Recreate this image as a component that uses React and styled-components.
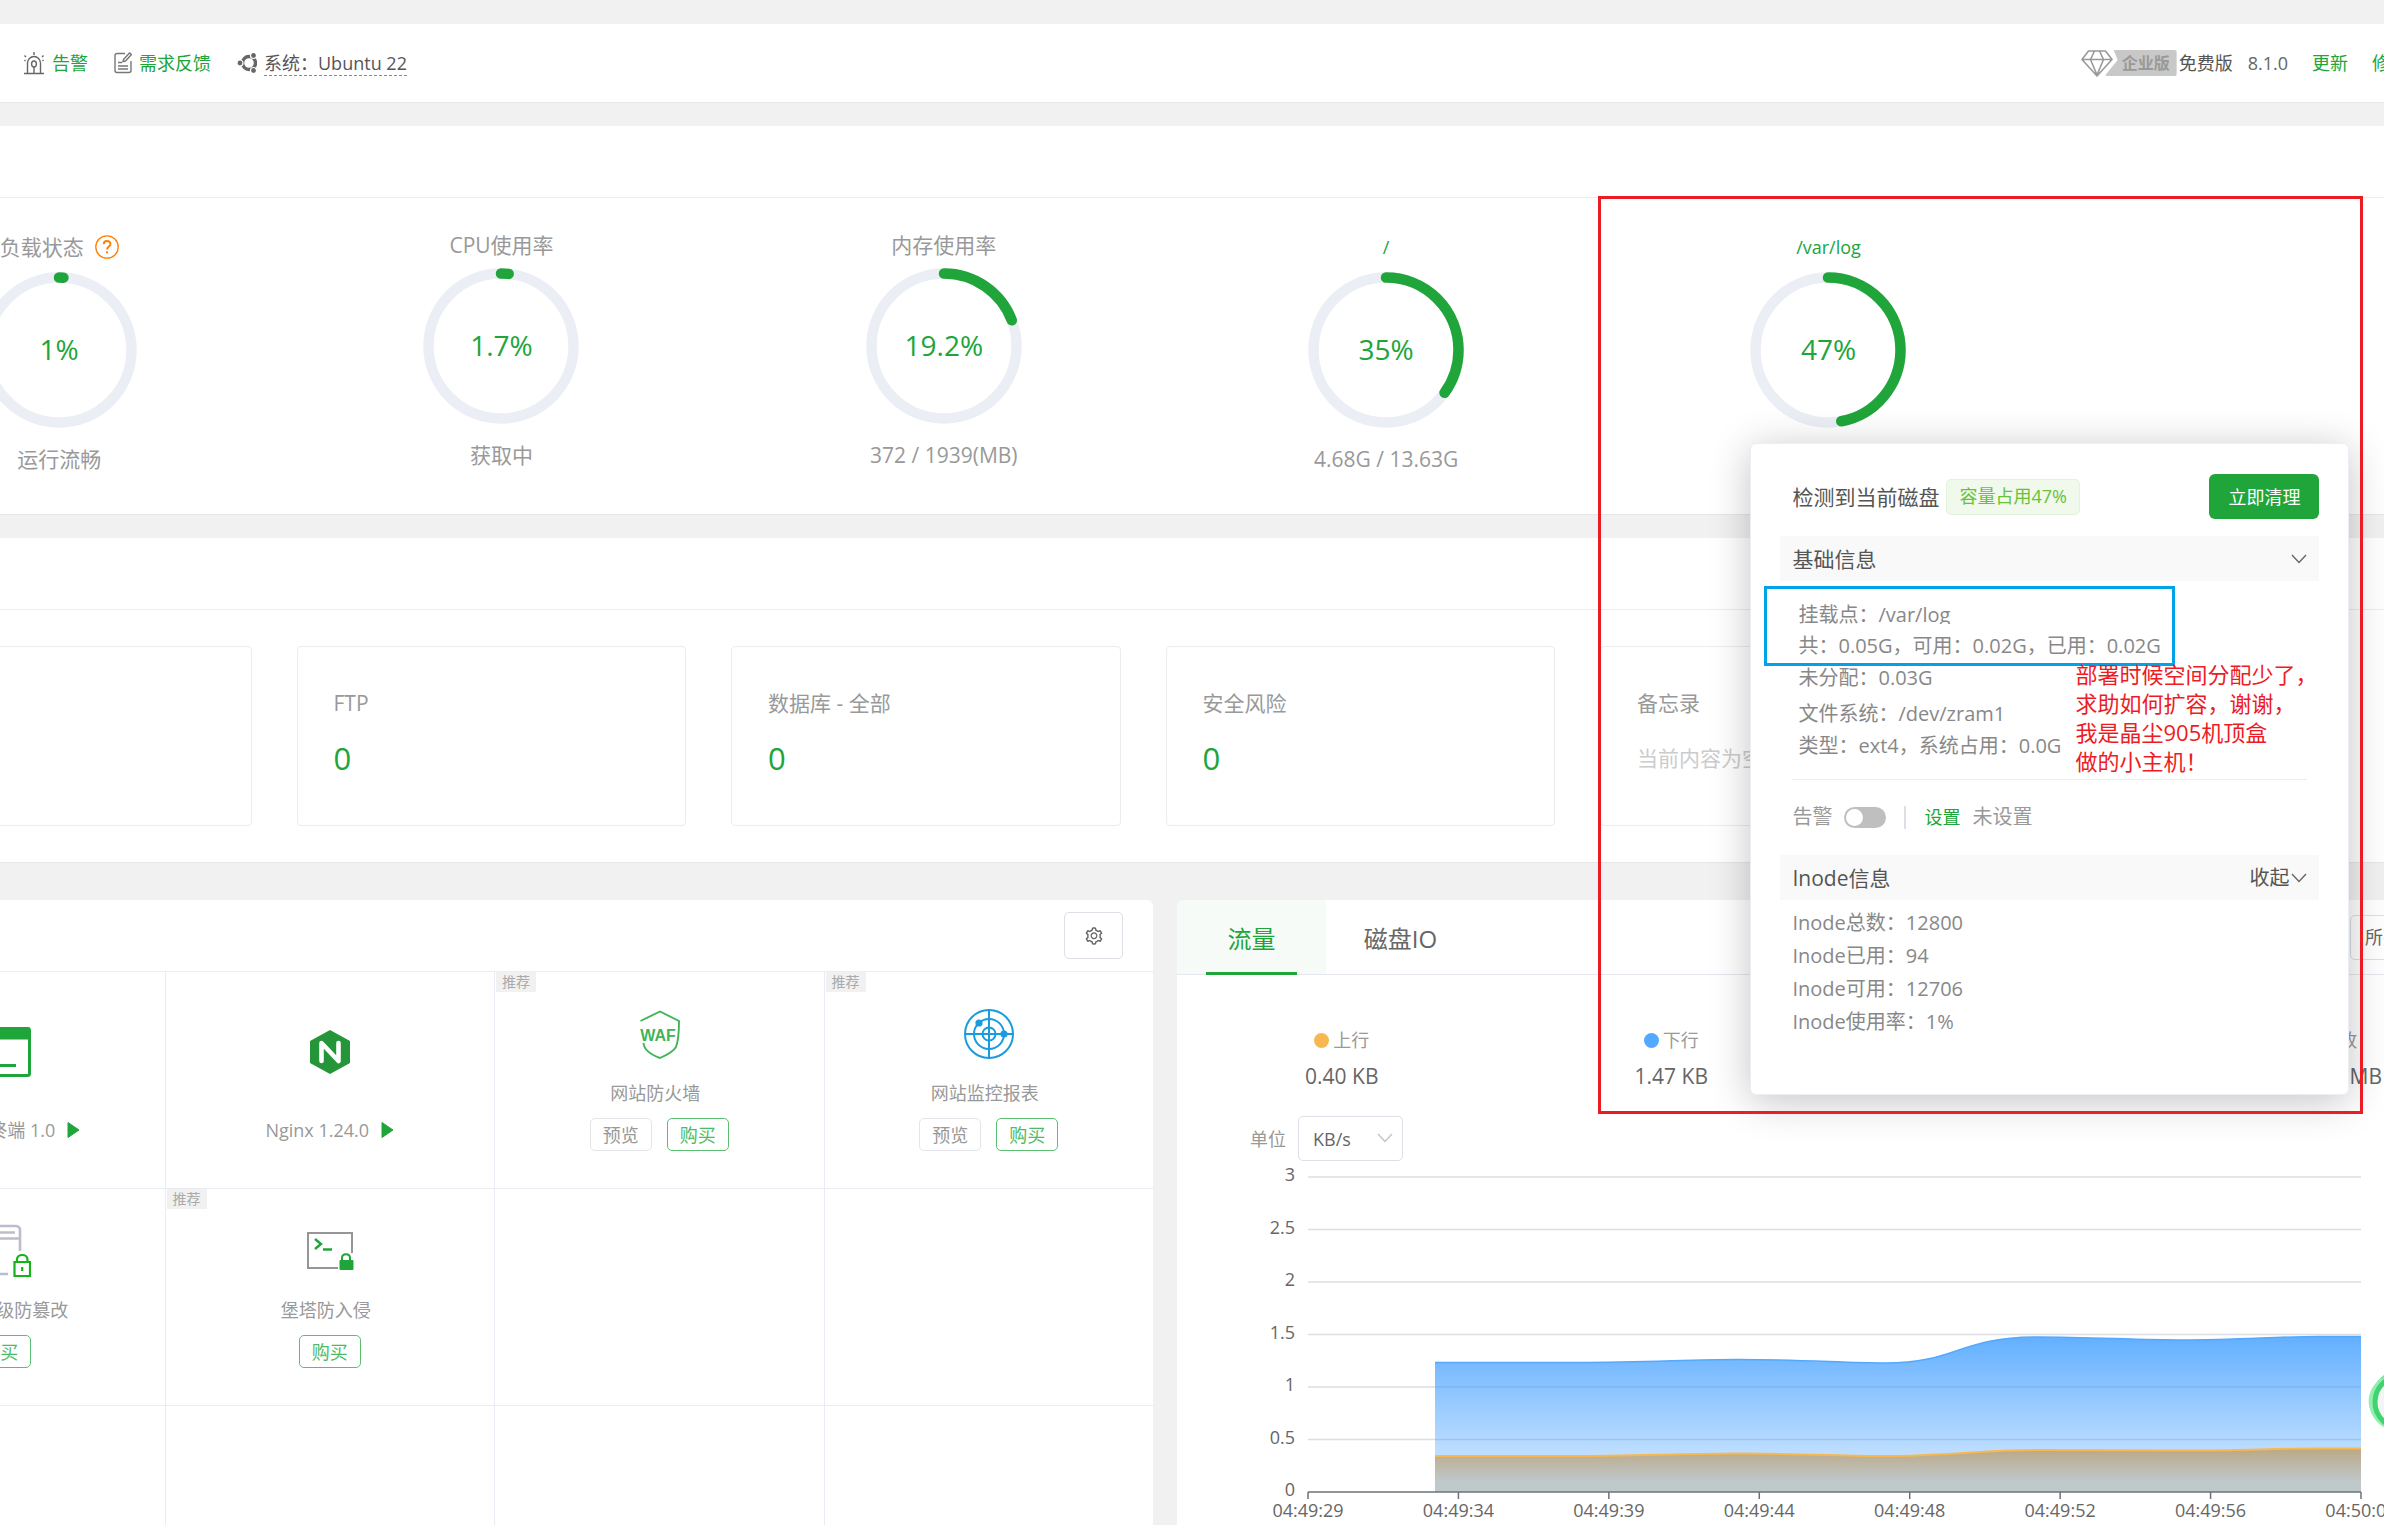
import React from "react";
import styled, { createGlobalStyle, css } from "styled-components";
import { AiOutlineSetting } from "react-icons/ai";

const GREEN = "#20a53a";

const GlobalStyle = createGlobalStyle`
  *, *::before, *::after { box-sizing: border-box; }
  body {
    margin: 0;
    background: #f1f1f1;
    color: #999;
    font-family: "Open Sans", "Noto Sans CJK SC", sans-serif;
    font-size: 18px;
    line-height: 24px;
  }
  button, input, select { font: inherit; color: inherit; }
  svg { display: block; flex: none; }
`;

/* ---------- page frame ---------- */

const Page = styled.div`
  position: relative;
  height: 100vh;
  overflow: hidden;
  padding-top: 24px;
`;

const Shell = styled.main`
  margin: 0 -111px 0 -165px;
  display: flex;
  flex-direction: column;
  gap: 23px;
`;

const Panel = styled.section`
  background: #fff;
  border-bottom: 1px solid #e6e6e6;
`;

const PanelHead = styled.div`
  height: 72px;
  border-bottom: 1px solid #ebeef0;
  display: flex;
  align-items: center;
  justify-content: flex-end;
  padding: 0 30px;
`;

/* ---------- top bar ---------- */

const TopBar = styled.header`
  display: flex;
  align-items: center;
  height: 79px;
  padding: 0 87px 0 188px;
  background: #fff;
  border-bottom: 1px solid #e6e6e6;
`;

const TopItem = styled.div`
  display: flex;
  align-items: center;
  gap: 7px;
  margin-right: 26px;
`;

const Link = styled.a`
  color: ${GREEN};
  text-decoration: none;
`;

const SystemName = styled.span`
  color: #555;
  border-bottom: 1px dashed #888;
`;

const Spacer = styled.div`
  flex: 1;
`;

const Edition = styled.div`
  display: flex;
  align-items: center;
  color: #555;
  margin-right: 15px;
`;

const EditionBadge = styled.span`
  height: 26px;
  line-height: 26px;
  padding: 0 7px 0 17px;
  margin: 0 2px 0 -8px;
  background: #c8c8c8;
  color: #999;
  font-size: 16px;
  font-weight: 700;
  border-radius: 2px;
  clip-path: polygon(9px 0, 100% 0, 100% 100%, 0 100%, 13px 10px);
`;

const Version = styled.span`
  color: #666;
  margin-right: 24px;
`;

const TopLinks = styled.nav`
  display: flex;
  gap: 24px;
`;

/* ---------- gauges ---------- */

const Gauges = styled.div`
  display: grid;
  grid-template-columns: repeat(6, 1fr);
  height: 316px;
  padding: 33px 3px 0;
  font-size: 21px;
`;

const Gauge = styled.div`
  display: flex;
  flex-direction: column;
  align-items: center;
`;

const GaugeTitle = styled.div`
  display: flex;
  align-items: center;
  gap: 11px;
  height: ${(p) => (p.$tall ? 32 : 28)}px;
  margin-bottom: 9px;
  a { font-size: 18px; }
`;

const Ring = styled.div`
  position: relative;
  display: grid;
  place-items: center;
  width: 156px;
  height: 156px;
  > svg, > span { grid-area: 1 / 1; }
  > span { color: ${GREEN}; font-size: 28px; padding-bottom: 2px; }
`;

const GaugeNote = styled.div`
  margin-top: 16px;
  line-height: 30px;
`;

/* ---------- summary cards ---------- */

const Cards = styled.div`
  display: grid;
  grid-template-columns: repeat(6, 1fr);
  gap: 45px;
  padding: 36px 71px 36px 27px;
`;

const Card = styled.article`
  height: 180px;
  padding: 41px 36px 0;
  border: 1px solid #ececec;
  border-radius: 4px;
  font-size: 21px;
  line-height: 30px;
  white-space: nowrap;
`;

const CardValue = styled.div`
  margin-top: 20px;
  line-height: 40px;
  ${(p) => (p.$muted ? css`color: #ccc;` : css`color: ${GREEN}; font-size: 31px;`)}
`;

/* ---------- software ---------- */

const Columns = styled.div`
  display: grid;
  grid-template-columns: minmax(0, 1fr) minmax(0, 1fr);
  gap: 24px;
  margin-top: 14px;
`;

const Rounded = styled.section`
  background: #fff;
  border-radius: 6px;
`;

const IconButton = styled.button`
  display: grid;
  place-items: center;
  width: 59px;
  height: 47px;
  border: 1px solid #dcdfe6;
  border-radius: 5px;
  background: #fff;
  color: #666;
`;

const Apps = styled.div`
  display: grid;
  grid-template-columns: repeat(4, 1fr);
`;

const AppCell = styled.div`
  position: relative;
  display: flex;
  flex-direction: column;
  align-items: center;
  height: 217px;
  padding-top: ${(p) => (p.$running ? 52 : 34)}px;
  border-left: 1px solid #ebebf5;
  border-bottom: 1px solid #ebebf5;
`;

const Tag = styled.span`
  position: absolute;
  top: 0;
  left: 1px;
  padding: 0 6px;
  background: #f1f1f1;
  color: #aaa;
  font-size: 14px;
  line-height: 20px;
`;

const AppIcon = styled.div`
  display: grid;
  place-items: center;
  height: 56px;
`;

const AppName = styled.div`
  display: flex;
  align-items: center;
  gap: 12px;
  margin-top: ${(p) => (p.$running ? 38 : 19)}px;
  padding-right: ${(p) => (p.$running ? 0 : 8)}px;
`;

const AppActions = styled.div`
  display: flex;
  gap: 15px;
  margin-top: 13px;
`;

const SmallButton = styled.button`
  width: 62px;
  height: 33px;
  padding: 0;
  border-radius: 5px;
  background: #fff;
  border: 1px solid ${(p) => (p.$buy ? "#5bbf72" : "#e3e5ea")};
  color: ${(p) => (p.$buy ? "#4dbb65" : "#999")};
`;

/* ---------- traffic ---------- */

const Tabs = styled.div`
  display: flex;
  align-items: center;
  height: 75px;
  border-bottom: 1px solid #e4e7ed;
`;

const Tab = styled.button`
  width: 149px;
  height: 74px;
  padding: 0 29px;
  border: 0;
  border-radius: 6px 0 0 0;
  font-size: 24px;
  background: ${(p) => (p.$active ? "#f6fbf8" : "none")};
  color: ${(p) => (p.$active ? GREEN : "#666")};
  span {
    display: grid;
    place-items: center;
    height: 75px;
    padding-top: 5px;
    border-bottom: 3px solid ${(p) => (p.$active ? GREEN : "transparent")};
  }
`;

const SelectBox = styled.span`
  position: relative;
  width: ${(p) => p.$width}px;
  svg {
    position: absolute;
    right: 10px;
    top: 17px;
    pointer-events: none;
  }
`;

const Select = styled.select`
  appearance: none;
  display: block;
  width: 100%;
  height: 45px;
  padding: 0 14px;
  border: 1px solid #dcdfe6;
  border-radius: 5px;
  background: #fff;
  color: #666;
`;

const Stats = styled.dl`
  display: grid;
  grid-template-columns: repeat(4, 1fr);
  margin: 53px 0 28px;
  text-align: center;
`;

const StatName = styled.dt`
  display: flex;
  align-items: center;
  justify-content: center;
  gap: 4px;
  &::before {
    content: ${(p) => (p.$dot ? '""' : "none")};
    width: 15px;
    height: 15px;
    border-radius: 50%;
    background: ${(p) => p.$dot};
  }
`;

const StatValue = styled.dd`
  margin: 12px 0 0;
  color: #666;
  font-size: 21px;
`;

const UnitRow = styled.div`
  display: flex;
  align-items: center;
  gap: 12px;
  padding-left: 73px;
`;

const Chart = styled.figure`
  display: grid;
  grid-template-columns: 118px minmax(0, 1fr);
  column-gap: 13px;
  margin: 16px 134px 0 0;
  color: #666;
  svg { width: 100%; height: 315px; overflow: visible; }
`;

const YAxis = styled.div`
  display: flex;
  flex-direction: column;
  justify-content: space-between;
  align-items: flex-end;
  margin: -15px 0 -9px;
`;

const XAxis = styled.div`
  grid-column: 2;
  display: flex;
  justify-content: space-between;
  margin: 6px -40px 0;
  span { width: 80px; text-align: center; }
`;

/* ---------- disk popover ---------- */

const Popover = styled.div`
  position: absolute;
  top: 171px;
  left: 0;
  z-index: 5;
  width: 599px;
  padding: 30px 29px 56px;
  border: 1px solid #ebeef5;
  border-radius: 6px;
  background: #fff;
  box-shadow: 0 6px 40px rgba(0, 0, 0, 0.24);
  color: #888;
  font-size: 20px;
  line-height: 32px;
  white-space: nowrap;
`;

const PopHead = styled.div`
  display: flex;
  align-items: center;
  height: 45px;
  margin-bottom: 17px;
  padding-left: 12px;
  color: #555;
  font-size: 21px;
`;

const Usage = styled.span`
  height: 36px;
  margin-left: 7px;
  padding: 0 12px;
  border: 1px solid #e1f3d8;
  border-radius: 5px;
  background: #f0f9eb;
  color: #67c23a;
  font-size: 18px;
`;

const CleanButton = styled.button`
  width: 110px;
  height: 45px;
  margin-left: auto;
  border: 0;
  border-radius: 6px;
  background: ${GREEN};
  color: #fff;
  font-size: 18px;
`;

const Section = styled.button`
  display: flex;
  align-items: center;
  width: 100%;
  height: 45px;
  padding: 0 12px;
  border: 0;
  background: #f9f9f9;
  color: #555;
  font-size: 21px;
  small { font-size: 20px; margin-right: 2px; }
`;

const Details = styled.div`
  margin: 18px 12px 0;
  padding: 0 6px 17px;
  border-bottom: 1px solid #ebeef0;
`;

const Line = styled.div`
  height: 32px;
  & + &[data-group] { margin-top: 4px; }
`;

/* The mount point sits in a scroll box that trims its descenders. */
const MountLine = styled.div`
  height: 25px;
  margin-bottom: 6px;
  overflow: hidden;
`;

const AlarmRow = styled.div`
  display: flex;
  align-items: center;
  height: 28px;
  margin: 23px 12px 24px;
  color: #999;
  a { font-size: 18px; margin-right: 12px; }
`;

const Switch = styled.input`
  appearance: none;
  width: 42px;
  height: 21px;
  margin: 0 18px 0 12px;
  border-radius: 11px;
  background: #bfbfbf;
  &::before {
    content: "";
    display: block;
    width: 17px;
    height: 17px;
    margin: 2px;
    border-radius: 50%;
    background: #fff;
  }
`;

const Rule = styled.span`
  width: 2px;
  height: 23px;
  margin-right: 18px;
  background: #dcdfe6;
`;

const Inodes = styled.div`
  padding: 6px 12px 0;
  line-height: 33px;
`;

/* ---------- hand-drawn marks over the page ---------- */

const RedFrame = styled.div`
  position: absolute;
  top: 196px;
  left: 1598px;
  z-index: 6;
  width: 765px;
  height: 918px;
  border: 3px solid #ed1c24;
  pointer-events: none;
`;

const BlueFrame = styled.div`
  position: absolute;
  top: 142px;
  left: 13px;
  width: 411px;
  height: 80px;
  border: 3px solid #00a2e8;
`;

const RedNote = styled.p`
  position: absolute;
  top: 216px;
  left: 324px;
  margin: 0;
  color: #ed1c24;
  font-size: 22px;
  line-height: 29px;
`;

const Helper = styled.div`
  position: absolute;
  top: 1370px;
  right: -48px;
`;

/* ---------- icons ---------- */

const AlarmIcon = () => (
  <svg width="22" height="24" viewBox="0 0 22 24" fill="none" stroke="#666" strokeWidth="1.4">
    <path d="M1 22.5h20M4.5 22V12a6.5 6.5 0 0 1 13 0v10M11 4V1M3 6 1.5 4.5M19 6l1.500-1.500M1.500 9l1 1M20.500 9l-1 1" />
    <ellipse cx="11" cy="13" rx="2.400" ry="3" />
    <path d="M11 16v6" />
  </svg>
);

const NoteIcon = () => (
  <svg width="18" height="22" viewBox="0 0 18 22" fill="none" stroke="#777" strokeWidth="1.400">
    <path d="M11 1.500H3A2 2 0 0 0 1 3.500v15a2 2 0 0 0 2 2h12a2 2 0 0 0 2-2V9M4 10.500h4M4 14h10M4 17h10" />
    <path d="M9.500 7.500 15.500 1l2 1.500-6 6.500-2.500.500z" />
  </svg>
);

const UbuntuIcon = () => (
  <svg width="20" height="22" viewBox="0 0 20 22">
    <circle cx="12" cy="11" r="6.500" fill="none" stroke="#666" strokeWidth="3.400" />
    <g fill="#666" stroke="#fff" strokeWidth="1.200">
      <circle cx="3" cy="11" r="3" />
      <circle cx="16.500" cy="3.500" r="3" />
      <circle cx="16.500" cy="18.500" r="3" />
    </g>
  </svg>
);

const DiamondIcon = () => (
  <svg width="32" height="27" viewBox="0 0 32 27" fill="none" stroke="#999" strokeWidth="1.600" strokeLinejoin="round">
    <path d="M7.500 1h17L31 9.500 16 26 1 9.500zM1 9.500h30M13.500 1 9.500 9.500 16 25l6.500-15.500L18.500 1" />
  </svg>
);

const HelpIcon = () => (
  <svg width="24" height="24" viewBox="0 0 24 24" fill="none" stroke="#ff7f00" strokeWidth="1.300">
    <circle cx="12" cy="12" r="11.200" />
    <path d="M8.700 9.300c0-4.400 6.800-4.200 6.800-.300 0 2.500-3.400 2.700-3.400 5.500" strokeWidth="1.900" />
    <path d="M12.100 16.300v2" strokeWidth="2" />
  </svg>
);

const Chevron = ({ color = "#666" }) => (
  <svg width="16" height="10" viewBox="0 0 16 10" fill="none" stroke={color} strokeWidth="1.400">
    <path d="m1 1 7 7.500L15 1" />
  </svg>
);

const PlayIcon = () => (
  <svg width="13" height="16" viewBox="0 0 13 16">
    <path d="M1 .5 12 8 1 15.500z" fill={GREEN} stroke={GREEN} strokeLinejoin="round" />
  </svg>
);

const TerminalIcon = () => (
  <svg width="62" height="50" viewBox="0 0 62 50" fill="none" stroke={GREEN} strokeWidth="3">
    <rect x="1.500" y="1.500" width="59" height="47" rx="2" />
    <path d="M1 6.500h60" strokeWidth="12" />
    <path d="m12 22 9 8-9 8M31 38.500h16" />
  </svg>
);

const NginxIcon = () => (
  <svg width="42" height="44" viewBox="0 0 42 44">
    <path d="M21 0 41 11v22L21 44 1 33V11z" fill="#259539" />
    <path d="M12.500 31V13l17 18V13" fill="none" stroke="#fff" strokeWidth="4.600" strokeLinecap="round" strokeLinejoin="round" />
  </svg>
);

const WafIcon = () => (
  <svg width="42" height="49" viewBox="0 0 42 49" fill="none" stroke="#3fb558" strokeWidth="1.900">
    <path d="M2.500 11 22 1.500 41 11c0 10 0 18-3 26-3 5-9 8-16 11C14 45 6 41 5.500 33" />
    <text x="20" y="30.500" textAnchor="middle" fill="#3fb558" stroke="none" fontFamily="Liberation Sans, sans-serif" fontWeight="700" fontSize="16">WAF</text>
  </svg>
);

const RadarIcon = () => (
  <svg width="50" height="50" viewBox="0 0 50 50" fill="none" stroke="#1a9be0" strokeWidth="2">
    <circle cx="25" cy="25" r="24" />
    <circle cx="25" cy="25" r="15" />
    <circle cx="25" cy="25" r="6.500" />
    <path d="M25 1v48M1 25h48" />
    <circle cx="15" cy="14" r="3.600" fill="#1a9be0" stroke="none" />
    <circle cx="40" cy="25" r="3.600" fill="#1a9be0" stroke="none" />
  </svg>
);

const TamperIcon = () => (
  <svg width="62" height="54" viewBox="0 0 62 54" fill="none" stroke="#bdbccb" strokeWidth="2.600">
    <path d="M51 27V6a4 4 0 0 0-4-4H14a4 4 0 0 0-4 4v40a4 4 0 0 0 4 4h25M10 14.500h41M17 8.500h29" />
    <g stroke="#12b416" strokeWidth="2.200">
      <path d="M45.500 38h15.500v14H45.500zM48 38v-2.500c0-6 10.500-6 10.500 0V38M53.200 43v4" />
    </g>
  </svg>
);

const IntrusionIcon = () => (
  <svg width="48" height="40" viewBox="0 0 48 40" fill="none" stroke="#969696" strokeWidth="2">
    <path d="M46 22V2H2v35h30" />
    <path d="m9 8 6 5-6 5M17 18.500h9" stroke={GREEN} strokeWidth="2.400" />
    <path d="M36 30v-3c0-5 8-5 8 0v3" stroke={GREEN} />
    <rect x="33.500" y="29" width="14" height="10" rx="1" fill={GREEN} stroke="none" />
  </svg>
);

const HelperIcon = () => (
  <svg width="64" height="64" viewBox="0 0 64 64" fill="none">
    <ellipse cx="34" cy="30" rx="29" ry="26" stroke="#76e39b" strokeWidth="6" transform="rotate(-40 32 32)" />
    <ellipse cx="32" cy="34" rx="28" ry="25" stroke="#95eeb0" strokeWidth="6" transform="rotate(30 32 32)" />
    <circle cx="33" cy="32" r="26" fill="#f4f4f4" stroke="#3fd46f" strokeWidth="5" />
  </svg>
);

/* ---------- data ---------- */

const gauges = [
  { title: "负载状态", help: true, value: 1, note: "运行流畅" },
  { title: "CPU使用率", value: 1.7, note: "获取中" },
  { title: "内存使用率", value: 19.2, note: "372 / 1939(MB)" },
  { title: "/", disk: true, value: 35, note: "4.68G / 13.63G" },
  { title: "/var/log", disk: true, value: 47, open: true },
];

const cards = [
  { title: "网站 - 全部", value: "0" },
  { title: "FTP", value: "0" },
  { title: "数据库 - 全部", value: "0" },
  { title: "安全风险", value: "0" },
  { title: "备忘录", note: "当前内容为空" },
];

const apps = [
  { name: "宝塔SSH终端 1.0", Icon: TerminalIcon, running: true },
  { name: "Nginx 1.24.0", Icon: NginxIcon, running: true },
  { name: "网站防火墙", Icon: WafIcon, tag: true, preview: true },
  { name: "网站监控报表", Icon: RadarIcon, tag: true, preview: true },
  { name: "堡塔企业级防篡改", Icon: TamperIcon, tag: true },
  { name: "堡塔防入侵", Icon: IntrusionIcon, tag: true },
  {}, {}, {}, {}, {}, {},
];

const stats = [
  { name: "上行", value: "0.40 KB", dot: "#f7b851" },
  { name: "下行", value: "1.47 KB", dot: "#52a9ff" },
  { name: "总发送", value: "101.32 MB" },
  { name: "总接收", value: "269.85 MB" },
];

const yTicks = ["3", "2.5", "2", "1.5", "1", "0.5", "0"];
const times = ["04:49:29", "04:49:34", "04:49:39", "04:49:44", "04:49:48", "04:49:52", "04:49:56", "04:50:00"];

const downLine =
  "M127 185.500H270C340 185.500 380 182.500 430 182.500C490 182.500 540 186 577 186C650 186 650 160 730 160C780 160 830 163 875 163C930 163 970 159.500 1010 159.500H1053";
const upLine =
  "M127 279H270C340 279 380 276.500 430 276.500C490 276.500 540 279 577 279C640 279 670 273 730 273C780 273 830 273.500 875 273.500C930 273.500 970 271.500 1010 271.500H1053";

/* ---------- parts ---------- */

function RingArc({ value }) {
  const length = 2 * Math.PI * 72.5;
  return (
    <svg width="156" height="156" viewBox="0 0 156 156" fill="none" strokeWidth="10.500">
      <circle cx="78" cy="78" r="72.500" stroke="#ebeef5" />
      <circle
        cx="78" cy="78" r="72.500" stroke={GREEN} strokeLinecap="round"
        strokeDasharray={`${(length * value) / 100} ${length}`} transform="rotate(-90 78 78)"
      />
    </svg>
  );
}

function DiskPopover() {
  return (
    <Popover role="dialog" aria-label="磁盘信息">
      <PopHead>
        检测到当前磁盘<Usage>容量占用47%</Usage>
        <CleanButton type="button">立即清理</CleanButton>
      </PopHead>
      <Section type="button">基础信息<Spacer /><Chevron /></Section>
      <Details>
        <MountLine>挂载点：/var/log</MountLine>
        <Line>共：0.05G，可用：0.02G，已用：0.02G</Line>
        <Line>未分配：0.03G</Line>
        <Line data-group>文件系统：/dev/zram1</Line>
        <Line>类型：ext4，系统占用：0.0G</Line>
      </Details>
      <AlarmRow>
        <label htmlFor="disk-alarm">告警</label>
        <Switch id="disk-alarm" type="checkbox" role="switch" />
        <Rule />
        <Link href="#set">设置</Link>
        <span>未设置</span>
      </AlarmRow>
      <Section type="button">Inode信息<Spacer /><small>收起</small><Chevron /></Section>
      <Inodes>
        <div>Inode总数：12800</div>
        <div>Inode已用：94</div>
        <div>Inode可用：12706</div>
        <div>Inode使用率：1%</div>
      </Inodes>
      <BlueFrame />
      <RedNote>
        部署时候空间分配少了，<br />求助如何扩容，谢谢，<br />我是晶尘905机顶盒<br />做的小主机！
      </RedNote>
    </Popover>
  );
}

function TrafficChart() {
  return (
    <Chart>
      <YAxis>{yTicks.map((t) => <span key={t}>{t}</span>)}</YAxis>
      <svg viewBox="0 0 1053 315" preserveAspectRatio="none" fill="none">
        <defs>
          <linearGradient id="down" x1="0" y1="0" x2="0" y2="1">
            <stop offset="0" stopColor="#409eff" stopOpacity="0.82" />
            <stop offset="1" stopColor="#409eff" stopOpacity="0.18" />
          </linearGradient>
          <linearGradient id="up" x1="0" y1="0" x2="0" y2="1">
            <stop offset="0" stopColor="#bba885" />
            <stop offset="0.75" stopColor="#bfc8ca" />
            <stop offset="1" stopColor="#bfc8cc" />
          </linearGradient>
        </defs>
        {yTicks.slice(0, 6).map((t, i) => (
          <path key={t} d={`M0 ${i * 52.5}H1053`} stroke="#dcdee2" strokeWidth="1.500" />
        ))}
        <path d={`${downLine}V315H127z`} fill="url(#down)" />
        <path d={downLine} stroke="#52a9ff" strokeWidth="1.500" />
        <path d={`${upLine}V315H127z`} fill="url(#up)" />
        <path d={upLine} stroke="#f7b851" strokeWidth="2" />
        <path d="M0 315H1053" stroke="#6e7079" strokeWidth="1.500" />
        {times.map((t, i) => (
          <path key={t} d={`M${(i * 1053) / 7} 315v7`} stroke="#6e7079" strokeWidth="1.500" />
        ))}
      </svg>
      <XAxis>{times.map((t) => <span key={t}>{t}</span>)}</XAxis>
    </Chart>
  );
}

export default function App() {
  return (
    <Page>
      <GlobalStyle />
      <Shell>
        <TopBar>
          <TopItem><AlarmIcon /><Link href="#alarm">告警</Link></TopItem>
          <TopItem><NoteIcon /><Link href="#feedback">需求反馈</Link></TopItem>
          <TopItem><UbuntuIcon /><SystemName>系统：Ubuntu 22</SystemName></TopItem>
          <Spacer />
          <Edition><DiamondIcon /><EditionBadge>企业版</EditionBadge>免费版</Edition>
          <Version>8.1.0</Version>
          <TopLinks>
            <Link href="#update">更新</Link>
            <Link href="#repair">修复</Link>
          </TopLinks>
        </TopBar>

        <Panel>
          <PanelHead />
          <Gauges>
            {gauges.map((g) => (
              <Gauge key={g.title}>
                <GaugeTitle $tall={g.disk || g.help}>
                  {g.disk ? <Link href="#disk">{g.title}</Link> : g.title}
                  {g.help && <HelpIcon />}
                </GaugeTitle>
                <Ring>
                  <RingArc value={g.value} />
                  <span>{g.value}%</span>
                  {g.open && <DiskPopover />}
                </Ring>
                {g.note && <GaugeNote>{g.note}</GaugeNote>}
              </Gauge>
            ))}
          </Gauges>
        </Panel>

        <Panel>
          <PanelHead />
          <Cards>
            {cards.map((c) => (
              <Card key={c.title}>
                {c.title}
                <CardValue $muted={!!c.note}>{c.note || c.value}</CardValue>
              </Card>
            ))}
          </Cards>
        </Panel>

        <Columns>
          <Rounded>
            <PanelHead>
              <IconButton type="button" aria-label="设置"><AiOutlineSetting size={20} /></IconButton>
            </PanelHead>
            <Apps>
              {apps.map(({ name, Icon, running, tag, preview }, i) => (
                <AppCell key={i} $running={running}>
                  {tag && <Tag>推荐</Tag>}
                  {name && (
                    <>
                      <AppIcon><Icon /></AppIcon>
                      <AppName $running={running}>{name}{running && <PlayIcon />}</AppName>
                      {!running && (
                        <AppActions>
                          {preview && <SmallButton type="button">预览</SmallButton>}
                          <SmallButton type="button" $buy>购买</SmallButton>
                        </AppActions>
                      )}
                    </>
                  )}
                </AppCell>
              ))}
            </Apps>
          </Rounded>

          <Rounded>
            <Tabs>
              <Tab type="button" $active><span>流量</span></Tab>
              <Tab type="button"><span>磁盘IO</span></Tab>
              <Spacer />
              <SelectBox $width={145}>
                <Select aria-label="网卡"><option>所有</option></Select>
                <Chevron color="#c0c4cc" />
              </SelectBox>
            </Tabs>
            <Stats>
              {stats.map((s) => (
                <div key={s.name}>
                  <StatName $dot={s.dot}>{s.name}</StatName>
                  <StatValue>{s.value}</StatValue>
                </div>
              ))}
            </Stats>
            <UnitRow>
              <label htmlFor="unit">单位</label>
              <SelectBox $width={105}>
                <Select id="unit"><option>KB/s</option></Select>
                <Chevron color="#c0c4cc" />
              </SelectBox>
            </UnitRow>
            <TrafficChart />
          </Rounded>
        </Columns>
      </Shell>
      <RedFrame />
      <Helper><HelperIcon /></Helper>
    </Page>
  );
}
